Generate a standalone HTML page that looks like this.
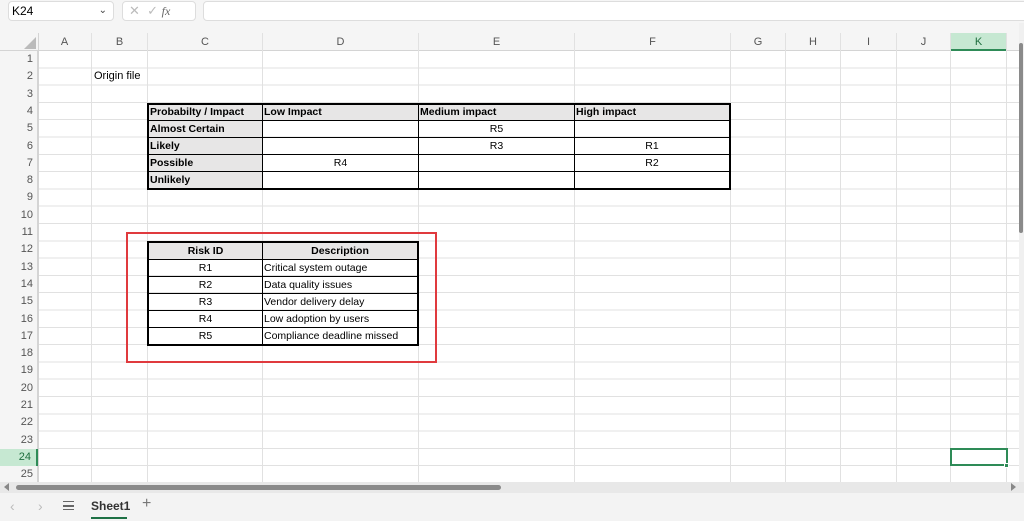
<!DOCTYPE html>
<html><head><meta charset="utf-8"><style>
*{margin:0;padding:0;box-sizing:border-box}
body{width:1024px;height:521px;overflow:hidden;background:#f5f5f5;font-family:"Liberation Sans",Calibri,sans-serif;position:relative}
.a{position:absolute}
.grid{left:38px;top:51px;width:981px;height:431px;background:#fff;
background-image:repeating-linear-gradient(to bottom,transparent 0,transparent 16.3px,#e1e1e1 16.3px,#e1e1e1 17.3px)}
.vl{position:absolute;top:33px;width:1px;height:449px;background:#e1e1e1}
.ch{position:absolute;top:33px;height:18px;font-size:11px;color:#555;text-align:center;line-height:18px;border-bottom:1px solid #d4d4d4}
.rh{position:absolute;left:0;width:38px;height:17.3px;font-size:11px;color:#555;text-align:right;padding-right:5px;line-height:17px}
.c{position:absolute;font-size:11px;color:#000;line-height:17px;white-space:nowrap;overflow:hidden}
.b{font-weight:bold}
.g{background:#e7e6e6}
table{font-size:10.5px}
</style></head><body>
<div class="a" style="left:0;top:0;width:1024px;height:23px;background:#f5f5f5"></div>
<div class="a" style="left:8px;top:1px;width:106px;height:20px;background:#fff;border:1px solid #ddd;border-radius:4px;font-size:12px;line-height:18px;padding-left:3px">K24<span style="position:absolute;right:6px;top:0;font-size:10px;color:#444">&#8964;</span></div>
<div class="a" style="left:122px;top:1px;width:74px;height:20px;background:#fff;border:1px solid #ddd;border-radius:4px;font-size:13px;color:#bbb;line-height:18px;padding-left:6px">✕ &nbsp;✓ <i style="font-family:'Liberation Serif',serif;color:#666;font-size:12px">fx</i></div>
<div class="a" style="left:203px;top:1px;width:830px;height:20px;background:#fff;border:1px solid #ddd;border-radius:4px"></div>
<div class="a grid"></div>
<div class="a" style="left:0;top:33px;width:1019px;height:18px;background:#f5f5f5;border-bottom:1px solid #d4d4d4"></div>
<div class="a" style="left:0;top:51px;width:38px;height:431px;background:#f5f5f5;border-right:1px solid #d4d4d4"></div>
<div class="a" style="left:24px;top:37px;width:0;height:0;border-left:12px solid transparent;border-bottom:12px solid #bbb"></div>
<div class="vl" style="left:38px;background:#d4d4d4"></div>
<div class="vl" style="left:91px"></div><div class="vl" style="left:147px"></div><div class="vl" style="left:262px"></div><div class="vl" style="left:418px"></div><div class="vl" style="left:574px"></div><div class="vl" style="left:730px"></div><div class="vl" style="left:785px"></div><div class="vl" style="left:840px"></div><div class="vl" style="left:896px"></div><div class="vl" style="left:950px"></div><div class="vl" style="left:1006px"></div>
<div class="ch" style="left:38px;width:53px">A</div><div class="ch" style="left:92px;width:55px">B</div><div class="ch" style="left:148px;width:114px">C</div><div class="ch" style="left:263px;width:155px">D</div><div class="ch" style="left:419px;width:155px">E</div><div class="ch" style="left:575px;width:155px">F</div><div class="ch" style="left:731px;width:54px">G</div><div class="ch" style="left:786px;width:54px">H</div><div class="ch" style="left:841px;width:55px">I</div><div class="ch" style="left:897px;width:53px">J</div>
<div class="ch" style="left:951px;width:55px;background:#c6e8d2;color:#1e6e3e;border-bottom:2px solid #2e8b57">K</div>
<div class="rh" style="top:51px">1</div><div class="rh" style="top:68.3px">2</div><div class="rh" style="top:85.6px">3</div><div class="rh" style="top:102.9px">4</div><div class="rh" style="top:120.2px">5</div><div class="rh" style="top:137.5px">6</div><div class="rh" style="top:154.8px">7</div><div class="rh" style="top:172.1px">8</div><div class="rh" style="top:189.4px">9</div><div class="rh" style="top:206.7px">10</div><div class="rh" style="top:224px">11</div><div class="rh" style="top:241.3px">12</div><div class="rh" style="top:258.6px">13</div><div class="rh" style="top:275.9px">14</div><div class="rh" style="top:293.2px">15</div><div class="rh" style="top:310.5px">16</div><div class="rh" style="top:327.8px">17</div><div class="rh" style="top:345.1px">18</div><div class="rh" style="top:362.4px">19</div><div class="rh" style="top:379.7px">20</div><div class="rh" style="top:397px">21</div><div class="rh" style="top:414.3px">22</div><div class="rh" style="top:431.6px">23</div>
<div class="rh" style="top:448.9px;background:#c6e8d2;color:#1e6e3e;border-right:2px solid #2e8b57">24</div>
<div class="rh" style="top:466.2px;height:16px;overflow:hidden">25</div>
<div class="c" style="left:94px;top:68.3px">Origin file</div>
<div class="a" style="left:147px;top:102.5px;width:584px;height:87px;border:1.5px solid #000">
<table style="border-collapse:collapse;width:100%;height:100%;table-layout:fixed">
<colgroup><col style="width:114px"><col style="width:156px"><col style="width:156px"><col></colgroup>
<tr class="b g"><td style="border:1px solid #000;padding-left:1px">Probabilty / Impact</td><td style="border:1px solid #000;padding-left:1px">Low Impact</td><td style="border:1px solid #000;padding-left:1px">Medium impact</td><td style="border:1px solid #000;padding-left:1px">High impact</td></tr>
<tr><td class="b g" style="border:1px solid #000;padding-left:1px">Almost Certain</td><td style="border:1px solid #000"></td><td style="border:1px solid #000;text-align:center">R5</td><td style="border:1px solid #000"></td></tr>
<tr><td class="b g" style="border:1px solid #000;padding-left:1px">Likely</td><td style="border:1px solid #000"></td><td style="border:1px solid #000;text-align:center">R3</td><td style="border:1px solid #000;text-align:center">R1</td></tr>
<tr><td class="b g" style="border:1px solid #000;padding-left:1px">Possible</td><td style="border:1px solid #000;text-align:center">R4</td><td style="border:1px solid #000"></td><td style="border:1px solid #000;text-align:center">R2</td></tr>
<tr><td class="b g" style="border:1px solid #000;padding-left:1px">Unlikely</td><td style="border:1px solid #000"></td><td style="border:1px solid #000"></td><td style="border:1px solid #000"></td></tr>
</table></div>
<div class="a" style="left:147px;top:241px;width:272px;height:105px;border:1.5px solid #000">
<table style="border-collapse:collapse;width:100%;height:100%;table-layout:fixed">
<colgroup><col style="width:114px"><col></colgroup>
<tr class="b g"><td style="border:1px solid #000;text-align:center">Risk ID</td><td style="border:1px solid #000;text-align:center">Description</td></tr>
<tr><td style="border:1px solid #000;text-align:center">R1</td><td style="border:1px solid #000;padding-left:1px">Critical system outage</td></tr>
<tr><td style="border:1px solid #000;text-align:center">R2</td><td style="border:1px solid #000;padding-left:1px">Data quality issues</td></tr>
<tr><td style="border:1px solid #000;text-align:center">R3</td><td style="border:1px solid #000;padding-left:1px">Vendor delivery delay</td></tr>
<tr><td style="border:1px solid #000;text-align:center">R4</td><td style="border:1px solid #000;padding-left:1px">Low adoption by users</td></tr>
<tr><td style="border:1px solid #000;text-align:center">R5</td><td style="border:1px solid #000;padding-left:1px">Compliance deadline missed</td></tr>
</table></div>
<div class="a" style="left:126px;top:232px;width:311px;height:131px;border:2px solid #e03a3e"></div>
<div class="a" style="left:950px;top:448px;width:58px;height:18px;border:2px solid #2e8b57"></div>
<div class="a" style="left:1004px;top:463px;width:5px;height:5px;background:#2e8b57;border:1px solid #fff"></div>
<div class="a" style="left:1019px;top:23px;width:5px;height:459px;background:#f0f0f0"></div>
<div class="a" style="left:1019px;top:43px;width:4px;height:190px;background:#8a8a8a;border-radius:2px"></div>
<div class="a" style="left:0;top:482px;width:1024px;height:11px;background:#e8e8e8"></div>
<div class="a" style="left:16px;top:485px;width:485px;height:5px;background:#8a8a8a;border-radius:3px"></div>
<div class="a" style="left:4px;top:483px;width:0;height:0;border-top:4px solid transparent;border-bottom:4px solid transparent;border-right:5px solid #888"></div>
<div class="a" style="left:1011px;top:483px;width:0;height:0;border-top:4px solid transparent;border-bottom:4px solid transparent;border-left:5px solid #888"></div>
<div class="a" style="left:0;top:493px;width:1024px;height:28px;background:#f3f3f3"></div>
<div class="a" style="left:10px;top:498px;font-size:14px;color:#bbb">&#8249;</div>
<div class="a" style="left:38px;top:498px;font-size:14px;color:#bbb">&#8250;</div>
<div class="a" style="left:63px;top:501px;width:11px;height:9px;border-top:1.5px solid #666;border-bottom:1.5px solid #666"></div>
<div class="a" style="left:63px;top:505px;width:11px;height:1.5px;background:#666"></div>
<div class="a" style="left:91px;top:499px;font-size:12px;font-weight:bold;color:#333">Sheet1</div>
<div class="a" style="left:91px;top:517px;width:36px;height:2px;background:#1e7145"></div>
<div class="a" style="left:142px;top:495px;font-size:16px;color:#777">+</div>
</body></html>
